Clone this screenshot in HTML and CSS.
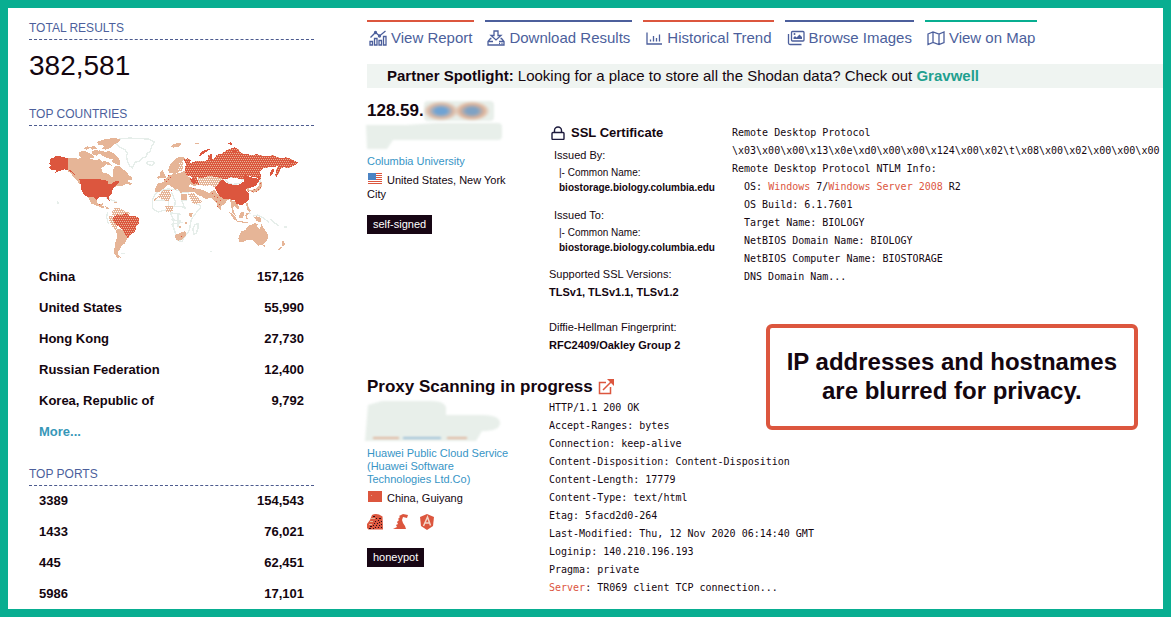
FILE: index.html
```html
<!DOCTYPE html>
<html lang="en">
<head>
<meta charset="utf-8">
<title>Search results</title>
<meta name="viewport" content="width=device-width, initial-scale=1">
<link rel="stylesheet" href="styles.css">
</head>
<body>
<div class="page">
  <aside class="sidebar">
    <h2 class="facet-title">TOTAL RESULTS</h2>
    <p class="total">382,581</p>

    <h2 class="facet-title">TOP COUNTRIES</h2>
    <svg class="map" viewBox="-3 -9 855 402" role="img" aria-label="World map of results">
      <defs>
        <pattern id="dense" width="12" height="12" patternUnits="userSpaceOnUse">
          <rect width="12" height="12" fill="#dc563e"/>
          <path d="M0 0h3v3H0zM6 0h3v3H6zM3 6h3v3H3zM9 6h3v3H9z" fill="#e6b597"/>
        </pattern>
        <pattern id="sparse" width="12" height="12" patternUnits="userSpaceOnUse">
          <rect width="12" height="12" fill="#e6b597"/>
          <path d="M0 0h3v3H0zM6 6h3v3H6z" fill="#dc563e"/>
        </pattern>
        <pattern id="light" width="12" height="12" patternUnits="userSpaceOnUse">
          <rect width="12" height="12" fill="#e6b597"/>
          <path d="M0 0h3v3H0zM6 0h3v3H6zM3 6h3v3H3zM9 6h3v3H9z" fill="#fff"/>
        </pattern>
      </defs>
      <g class="land-outline">
        <path d="M257 42l12-12 30-3 28 2 30 1 17 9-9 12-4 16-10 6-1 10-14 5-8 8-13 4-5 10-2 7-9-6-7-16-3-14 3-8-8-12-17-8z"/>
        <path d="M349 102l8-5 14 1 2 6-8 5-12-2z"/>
        <path d="M368 212l8-16 14-12 24-4 22 2 20 7 18 2 14 18 8 14 14 6 2 6-18 22-10 14-3 14-2 18-12 16-8 12-2 6-14-2-6-20-8-24 3-18-10-18-2-10-14-2-22 6-16-10z"/>
        <path d="M394 186v24h22v20m-44-16h42M424 190l12 26-2 16m20-42v24l12 26m-42-6l24-2 20 4m-44 16l28 4m-30 16l30 4m-8-22v40m-20-8l34-6M452 214h20"/>
        <path d="M489 300l6-14 9-2v14l-6 16-7 2z"/>
        <path d="M586 150l20-6 20 2 14 6-12 12-22 2-14-6z"/>
        <path d="M690 140l2 16-6 6M648 226l8 10 4 18M668 262l14-4 18 8 16 14M720 270l14 12 12 8M528 148l-4 14 8 10M608 206l8 8M228 206l20 8 14 6M232 250l-2 16 6 20M252 290l22 0 14 20"/>
        <path d="M80 218h4M82 222h4M274 374h10M540 368h6M762 294h8"/>
      </g>
      <g class="tan">
        <path d="M114 88l16-2 14 3 16-4 18 3 20 6 10-4 8 8 10-2 8 4-6 8-14 10 2 12 18 4 12 12 4-6-2-14 8-16 14 2 8 10 8 2 10 14 12 8-2 6-16 2 6 6 12 2-6 6-14-4-12 8-16 0-12 4-10-8-12-2H148l-6-12-12-10-8-12-8-4z"/>
        <path d="M204 48l-2-10 20-7 30-4 20 3-4 8-16 8-8 10-16 6-12-2 8-10z"/>
        <path d="M146 78l2-10 16-2 14 6 12 6 2 8-22 4-18-4zM160 58l12-6 8 4-10 6zM178 54l14-3 8 8-14 3zM186 66l14-4 12 10-12 8-12-4zM208 64l16 4 16-1 14 8 10 10 8 14-4 10-14-6-10-4 4-8-18-4-18-10-6-6z"/>
        <path d="M226 102l12-2 8 10-14-2z"/>
        <path d="M164 194l22 2 14 14 3 14 8 2 6-4 4 2-4 6 6 4-3 4-20-8-16-6-8-16-12-12z"/>
        <path d="M226 232l8 2 4 8-8-2zM252 220l8-1 2 3-8 1zM286 153l8-1v5l-6-1z"/>
        <path d="M247 248l6-10 8-2 14 4 12 8 14 4-12 12-16 0-10 4-10-6-6-4z" fill="url(#light)"/>
        <path d="M238 262l10-2 6 14 8 14-2 16-12-8-10-20z" fill="url(#light)"/>
        <path d="M258 302l14-2 16 10 10 10-8 12-6 12-10 6-4 10-6 10 2 10 6 6-12-2-9-12 4-26 6-22z"/>
        <path d="M422 52l10-8 20-2 2 6-10 6-14 2zM494 42l12-1 2 4-10 1z"/>
        <path d="M414 124l6-18 14-14 12-8 14-1 4 6-6 6 2 18-6 8-10 10-12 6-6-6-8 2z"/>
        <path d="M390 140l2-14 6-3 4 10 6 10-2 4-16 1zM382 146l5-8 3 8-6 4z"/>
        <path d="M384 162l16-2 2-8 12-8 12-8 14-2 16-4 10-6 8 18 14 10 14 6 2 10-12 4-10-6-8 6 12 4 12 2-4 10-18 2-14-2-10 4-4-8-8-6-4 6-10-10-8-6-8 2-8 8-14 10-10 2-4-6z"/>
        <path d="M440 122l10-22 8-4 2 22-6 8z" fill="url(#light)"/>
        <path d="M386 196l14-12 18-2 6 18-8 16-14-2-16-10zM474 194l16-1 14 14 12 12-16 6-12-2-8-16zM406 232h24v14l-20 4z" fill="url(#light)"/>
        <path d="M454 194h18v20h-18zM456 176l22-2 14 4-4 6-28 1zM492 180l14-1 18 6 14 8 2 12-12 6-12-8-12-4-10-10z"/>
        <path d="M372 212l14-12 2 2-14 14zM476 252h12l-2 12-10-2zM464 280l6-2v6h-4zM448 290h6v6h-6z"/>
        <path d="M436 318l14-6 16-6 3 12-10 12-14 5-8-2z"/>
        <path d="M500 152l14-12 16-4 14-3 16 2 16 10 4 10-12 16-12 4-16-6-18 2-16-4-6-6z" fill="url(#light)"/>
        <path d="M538 192l14-10 10 12 12 6 14 6 16 0-12 8-10 12-8 6-3 12-8-8-4-16-10-8-10-8z"/>
        <path d="M600 208l8 8 12 0 4 12 6 10-8 2-8-8-6 2 4 16 6 12-10-8-4-18z"/>
        <path d="M596 248l8 4 14 14 6 12-12-6zM620 276l26 2 12 4-14 0-24-4zM626 260l10-12 8 4-6 16-10-2zM646 258l4-6 8 2-8 4 4 14-6-4zM672 264l8-2 12 4v14l-12-4z"/>
        <path d="M648 222l6 2 2 14 6 6-2 8-8-8zM646 208l5-3v7h-4z"/>
        <path d="M660 184l16-4 8-6 6-14 6 0-2 18-10 8-14 6zM648 176l8-2 4 12-6 4z" fill="url(#sparse)"/>
        <path d="M633 308l14-6 8-12 12-4 8-4 8 4-2 8 8 6 6-16 6 14 10 12 4 16-6 12-10 10-14 2-8-8-10-8-14-2-18 8-8 0-2-12z"/>
        <path d="M698 348h8l-3 6zM756 336l4 0 6 10-6 6-4-2zM744 360l12-8-2 6-8 6zM356 388h4M260 384l8 2h-8z"/>
      </g>
      <g class="red">
        <path d="M60 90l10-4 6-5 14 1 24 6v34l8 1 10 10 4 8-8-8-12-9-12-3-8 2-14 6-12 6 12-10-18-3-6-6 8-8-10-2 6-6z"/>
        <path d="M148 150h58l16 3 10 3 4 10 8-2 10-6 8-2 6 1-4 8-10 8-6 8-2 12-8 8-2 2 4 14-6-4-4-8-22 0-8 8-10-8-22-3-8-6-6-14-2-16z"/>
        <path d="M262 256l12 2 16-6 6 8 20 2 12 6-2 16-8 10-2 14-10 6-8 8-4 8-6-10-6-12-10-12-10-6-10-8-4-16z" fill="url(#dense)"/>
        <path d="M460 90l14-2 10 6-6 8 8-1 14-6 14 2 12-2 8-2 0-14 8-4 2 14 8 2 8-14 14-2 20-14 20-6 12 6 8 12 16 2 16 4 14-4 20 6 30-2 20 8 20-2 20 8 14 8-6 6-14 6-8 4-16-2-10 6-2 10-8 12-4-2 2-18 6-12-12 4-16 0-18 4-8 10 4 16-6 10-4-8-30-6-16 10-36-6-16 6-14-4-18-4-20-2-14 6-20-2 8 24-16-10-8-16-16-6-4-12 4-20z" fill="url(#dense)"/>
        <path d="M508 80l4-10 12-6 16-6-2 5-14 8-12 10zM590 42l12-2 6 8-10-2zM598 64l10 0 16 4-10 2zM776 94h12v6h-8zM718 138l6-16 8-2-2 14-8 6zM684 138l4 2 2 14-4-2z"/>
        <path d="M540 80l6-5v18l-6-4zM480 148l16 4-2 14-8-4z"/>
        <path d="M400 152l12-6 10 6-4 8-10 2zM414 138h12v14h-10z" fill="url(#sparse)"/>
        <path d="M554 176l10-8 6-12 10-4 10 10 18 5 18 0 14-8 4-6-8-4 6-6 4-6 16 8 18 2 8 6-4 8-8 10-16 6-10 1-2 8 8 8 2 14-6 10-14 9-8 1-6-2-4 0-6-12-16-4-16 0-12-8-8-12z"/>
        <path d="M546 192h3v3h-3zM552 200h3v3h-3zM562 204h3v3h-3zM570 212h3v3h-3zM558 216h3v3h-3zM566 224h3v3h-3zM560 232h3v3h-3zM580 208h3v3h-3zM424 182h3v3h-3zM488 177h3v3h-3zM452 320h3v3h-3zM208 226h3v3h-3z"/>
      </g>
    </svg>
    <ul class="facet">
      <li><span>China</span><span>157,126</span></li>
      <li><span>United States</span><span>55,990</span></li>
      <li><span>Hong Kong</span><span>27,730</span></li>
      <li><span>Russian Federation</span><span>12,400</span></li>
      <li><span>Korea, Republic of</span><span>9,792</span></li>
      <li><a class="more" href="#">More...</a></li>
    </ul>

    <h2 class="facet-title">TOP PORTS</h2>
    <ul class="facet">
      <li><span>3389</span><span>154,543</span></li>
      <li><span>1433</span><span>76,021</span></li>
      <li><span>445</span><span>62,451</span></li>
      <li><span>5986</span><span>17,101</span></li>
    </ul>
  </aside>

  <main class="main">
    <nav class="tabs">
      <a class="tab tab-red" href="#">
        <svg class="icon" viewBox="0 0 18 18" aria-hidden="true"><path d="M1.500 8.500l5-5 4 3.500 6-5M1 16v-3.500h2.500V16zM5.500 16V9.500H8V16zM10 16v-4.500h2.500V16zM14.500 16V7.500H17V16z"/><circle cx="6.500" cy="3.500" r="1"/><circle cx="10.500" cy="7" r="1"/></svg>
        View Report</a>
      <a class="tab tab-blue" href="#">
        <svg class="icon" viewBox="0 0 18 18" aria-hidden="true"><path d="M7 2h4v4.500h3L9 11 4 6.500h3zM4.500 9.500h-1L1 12.500V16h16v-3.500l-2.500-3h-1M1 12.500h5M12 12.500h5"/><path d="M12 14.500h1M14.500 14.500h1"/></svg>
        Download Results</a>
      <a class="tab tab-red" href="#">
        <svg class="icon" viewBox="0 0 18 18" aria-hidden="true"><path d="M2 3.500V15h15M5.500 12.500v-2M8.500 12.500V7M11.500 12.500V9M14.500 12.500V5.500"/></svg>
        Historical Trend</a>
      <a class="tab tab-blue" href="#">
        <svg class="icon" viewBox="0 0 18 18" aria-hidden="true"><rect x="4.500" y="2.500" width="12.500" height="9.500" rx="1"/><path d="M1.500 5v9q0 1.500 1.500 1.500h11.500"/><path class="solid" d="M6.500 10V8.500l1.500-1.500 1.500 1.500 3-3 2.500 2.500v2z"/><circle class="solid" cx="7.500" cy="5" r="1"/></svg>
        Browse Images</a>
      <a class="tab tab-green" href="#">
        <svg class="icon" viewBox="0 0 18 18" aria-hidden="true"><path d="M1 5l5-2 6 2 5-2v10.500l-5 2-6-2-5 2zM6 3v10.500M12 5v10.500"/></svg>
        View on Map</a>
    </nav>

    <p class="spotlight"><strong>Partner Spotlight:</strong> Looking for a place to store all the Shodan data? Check out <a href="#">Gravwell</a></p>

    <article class="record">
      <h3 class="record-title">128.59.<span class="masked-ip" aria-hidden="true"></span></h3>
      <div class="columns">
        <div class="host">
          <svg class="smudge smudge-small" viewBox="0 0 142 32" aria-hidden="true"><path d="M3 4h40l30-2h62q4 0 4 4v9q0 4-4 4H30l-6 9H4z"/></svg>
          <a class="org" href="#">Columbia University</a>
          <p class="place"><svg class="flag" viewBox="0 0 14 11" role="img" aria-label="United States"><path fill="#fff" d="M0 0h14v11H0z"/><path fill="#dc563e" d="M0 0h14v1H0zM0 2h14v1H0zM0 4h14v1H0zM0 6h14v1H0zM0 8h14v1H0zM0 10h14v1H0z"/><path fill="#4c84c4" d="M0 0h8v7H0z"/></svg>United States, New York City</p>
          <span class="badge">self-signed</span>
        </div>
        <section class="cert">
          <h4 class="cert-title"><svg class="lock" viewBox="0 0 14 14" aria-hidden="true"><rect x="1" y="6.500" width="12" height="7" rx="1"/><path d="M3.500 6.500V4.500a3.500 3.500 0 0 1 7 0v2"/></svg>SSL Certificate</h4>
          <dl class="issuer">
            <dt>Issued By:</dt>
            <dd>|- Common Name:<br><b>biostorage.biology.columbia.edu</b></dd>
            <dt>Issued To:</dt>
            <dd>|- Common Name:<br><b>biostorage.biology.columbia.edu</b></dd>
          </dl>
          <dl class="versions">
            <dt>Supported SSL Versions:</dt>
            <dd>TLSv1, TLSv1.1, TLSv1.2</dd>
            <dt>Diffie-Hellman Fingerprint:</dt>
            <dd>RFC2409/Oakley Group 2</dd>
          </dl>
        </section>
        <div class="banner">
          <code>Remote Desktop Protocol</code>
          <code>\x03\x00\x00\x13\x0e\xd0\x00\x00\x124\x00\x02\t\x08\x00\x02\x00\x00\x00</code>
          <code>Remote Desktop Protocol NTLM Info:</code>
          <code>  OS: <em>Windows</em> 7/<em>Windows</em> <em>Server</em> <em>2008</em> R2</code>
          <code>  OS Build: 6.1.7601</code>
          <code>  Target Name: BIOLOGY</code>
          <code>  NetBIOS Domain Name: BIOLOGY</code>
          <code>  NetBIOS Computer Name: BIOSTORAGE</code>
          <code>  DNS Domain Nam...</code>
        </div>
      </div>
    </article>

    <article class="record">
      <h3 class="record-title">Proxy Scanning in progress
        <a class="open" href="#" aria-label="Open host"><svg viewBox="0 0 16 16" aria-hidden="true"><path d="M8 3.500H1.500v11H12.500V8M5 11L14 2"/><path class="solid" d="M9 0h7v7z"/></svg></a></h3>
      <div class="columns columns-wide">
        <div class="host">
          <svg class="smudge smudge-large" viewBox="0 0 142 44" aria-hidden="true"><path d="M5 8l14-4h50q12 0 14 6v8h36q18 0 18 8t-18 8l-6 10H2z"/><path class="smudge-tan" d="M10 41h26M84 41h20"/><path class="smudge-blue" d="M40 41h38"/></svg>
          <a class="org" href="#">Huawei Public Cloud Service (Huawei Software Technologies Ltd.Co)</a>
          <p class="place"><svg class="flag" viewBox="0 0 14 11" role="img" aria-label="China"><path fill="#dc563e" d="M0 0h14v11H0z"/><path fill="#e9a58c" d="M3 4h1v1H3z"/></svg>China, Guiyang</p>
          <div class="tech">
            <svg viewBox="0 0 16 16" role="img" aria-label="Ruby"><path fill="#dc563e" d="M5 1q3-1.500 7-.500l3.500 2L16 15.500H1.500L0 14v-4l3-4z"/><path fill="#2a1018" d="M6 2h2v1H6zM9 4h1v1H9zM12 4h2v1h-2zM11 6h1v1h-1zM14 7h1v1h-1zM8 7h1v1H8zM12 8h1v1h-1zM10 9h1v1h-1zM7 9h1v1H7zM14 10h1v1h-1zM9 11h1v1H9zM12 11h1v1h-1zM6 11h1v1H6zM3 12h2v1H3zM8 13h1v1H8zM11 13h1v1h-1zM14 13h1v1h-1zM6 14h1v1H6zM2 14h2v1H2z"/><path fill="#e6b597" d="M4 4h4v1H4zM3 7h3v1H3zM2 10h3v1H2z"/></svg>
            <svg viewBox="0 0 16 16" role="img" aria-label="Web server"><path fill="#dc563e" d="M6 2l4-2 5 1-1 3-4-1-1 3 1 3 2 3 1 3H0l4-2-1-2 2-1-1-2 2-2-1-1 2-2z"/></svg>
            <svg viewBox="0 0 16 16" role="img" aria-label="Angular"><path fill="#dc563e" d="M8 0l7 3-1 9-6 4-6-4-1-9z"/><path stroke="#f3d5c7" stroke-width="1.500" fill="none" d="M4.500 12L8.500 3l3 8.500M6 9h5"/></svg>
          </div>
          <span class="badge">honeypot</span>
        </div>
        <div class="banner">
          <code>HTTP/1.1 200 OK</code>
          <code>Accept-Ranges: bytes</code>
          <code>Connection: keep-alive</code>
          <code>Content-Disposition: Content-Disposition</code>
          <code>Content-Length: 17779</code>
          <code>Content-Type: text/html</code>
          <code>Etag: 5facd2d0-264</code>
          <code>Last-Modified: Thu, 12 Nov 2020 06:14:40 GMT</code>
          <code>Loginip: 140.210.196.193</code>
          <code>Pragma: private</code>
          <code><em>Server</em>: TR069 client TCP connection...</code>
        </div>
      </div>
    </article>

    <p class="notice">IP addresses and hostnames<br>are blurred for privacy.</p>
  </main>
</div>
</body>
</html>
```

FILE: styles.css
```css
* {
  box-sizing: border-box;
}

body,
h2,
h3,
h4,
p,
ul,
dl,
dd {
  margin: 0;
  padding: 0;
}

body {
  background: #fff;
  color: #14060f;
  font-family: "Liberation Sans", Arial, sans-serif;
  font-size: 11px;
}

a {
  text-decoration: none;
}

.page {
  display: grid;
  grid-template-columns: 285px minmax(0, 1fr);
  gap: 53px;
  min-height: 100vh;
  padding-left: 21px;
  border: 8px solid #08ae91;
}

/* Sidebar */
.sidebar {
  padding: 12px 0 4px;
}

.facet-title {
  padding-bottom: 3px;
  border-bottom: 1px dashed #4c5a8e;
  color: #4c5f9c;
  font-size: 12px;
  font-weight: 400;
  line-height: 16px;
}

.total {
  margin: 10px 0 24px;
  font-size: 28px;
  line-height: 32px;
}

.map {
  display: block;
  width: 100%;
  shape-rendering: crispEdges;
}

.land-outline {
  fill: none;
  stroke: #e6eeea;
  stroke-width: 4;
}

.tan {
  fill: #e6b597;
}

.red {
  fill: #dc563e;
}

.facet {
  display: flex;
  flex-direction: column;
  gap: 10px;
  padding: 4px 10px 0;
  font-size: 13px;
  font-weight: 700;
  line-height: 21px;
  list-style: none;
}

.facet li {
  display: flex;
  justify-content: space-between;
}

.map + .facet {
  margin: 2px 0 24px;
}

.more {
  color: #3797b8;
}

/* Main column */
.main {
  position: relative;
  padding-top: 12px;
}

.tabs {
  display: flex;
  gap: 11px;
}

.tab {
  display: flex;
  align-items: center;
  gap: 4px;
  padding: 6px 2px 0;
  border-top: 2px solid;
  color: #4c5f9c;
  font-size: 15px;
  line-height: 20px;
  white-space: nowrap;
}

.tab-red {
  border-top-color: #dc563e;
}

.tab-blue {
  border-top-color: #4c5f9c;
}

.tab-green {
  border-top-color: #08ae91;
}

.icon {
  width: 18px;
  height: 18px;
  fill: none;
  stroke: #4c5f9c;
  stroke-width: 1.3;
}

.icon .solid {
  fill: #4c5f9c;
  stroke: none;
}

.spotlight {
  margin-top: 16px;
  padding-left: 20px;
  background: #eff4f1;
  font-size: 15px;
  line-height: 24px;
}

.spotlight a {
  color: #1fa08f;
  font-weight: 700;
}

/* Result records */
.record {
  margin-top: 13px;
}

.record + .record {
  margin-top: 23px;
}

.record-title {
  display: flex;
  align-items: center;
  font-size: 17px;
  line-height: 20px;
}

.masked-ip {
  width: 70px;
  height: 20px;
  border-radius: 4px;
  background:
    radial-gradient(ellipse 18px 10px at 17px 10px, #6fa3d4 30%, #dcb9a4 70%, transparent),
    radial-gradient(ellipse 18px 10px at 48px 10px, #7fa2c4 30%, #dfb49a 70%, transparent),
    #e8efea;
  filter: blur(1px);
}

.open {
  display: flex;
  margin-left: 5px;
}

.open svg {
  width: 16px;
  height: 16px;
  fill: none;
  stroke: #dc563e;
  stroke-width: 1.5;
}

.open .solid {
  fill: #dc563e;
  stroke: none;
}

.columns {
  display: grid;
  grid-template-columns: 182px 183px minmax(0, 1fr);
}

.columns-wide {
  grid-template-columns: 182px minmax(0, 1fr);
}

.host {
  display: flex;
  flex-direction: column;
  align-items: flex-start;
  padding-right: 36px;
}

.smudge {
  width: 142px;
  margin-left: -4px;
  fill: #e8efea;
  filter: blur(1px);
}

.smudge-small {
  height: 32px;
  margin-bottom: 2px;
}

.smudge-large {
  height: 44px;
  margin-bottom: 6px;
}

.smudge-tan {
  stroke: #dfb79f;
  stroke-width: 2;
}

.smudge-blue {
  stroke: #9fc0d8;
  stroke-width: 2;
}

.org {
  color: #3795c6;
  line-height: 13px;
}

.place {
  margin-top: 5px;
  line-height: 14px;
}

.flag {
  width: 14px;
  height: 11px;
  margin: 0 5px 0 1px;
}

.tech {
  display: flex;
  gap: 10px;
  margin-top: 9px;
}

.tech svg {
  width: 16px;
  height: 16px;
}

.badge {
  margin-top: 14px;
  padding: 0 6px;
  background: #170614;
  color: #fff;
  line-height: 19px;
}

.tech + .badge {
  margin-top: 18px;
}

.cert {
  padding-top: 2px;
}

.cert-title {
  display: flex;
  align-items: center;
  gap: 6px;
  padding-left: 2px;
  font-size: 13px;
  line-height: 20px;
}

.lock {
  width: 14px;
  height: 14px;
  fill: none;
  stroke: #1c1a3c;
  stroke-width: 1.4;
}

.issuer {
  padding: 4px 0 0 5px;
}

.issuer dt {
  line-height: 16px;
}

.issuer dd {
  margin-bottom: 12px;
  padding: 2px 0 0 5px;
  font-size: 10px;
  line-height: 15px;
}

.issuer dd:last-child {
  margin-bottom: 10px;
}

.versions {
  line-height: 18px;
}

.versions dd {
  margin-bottom: 17px;
  font-weight: 700;
}

.versions dd:last-child {
  margin-bottom: 0;
}

.banner {
  padding-top: 3px;
  overflow: hidden;
}

.columns-wide .banner {
  padding-top: 2px;
}

.banner code {
  display: block;
  font-family: "DejaVu Sans Mono", monospace;
  font-size: 10px;
  line-height: 18px;
  white-space: pre;
}

.banner em {
  color: #dc563e;
  font-style: normal;
}

.notice {
  position: absolute;
  top: 316px;
  right: 25px;
  padding: 19px 17px 21px;
  border: 4px solid #dc563e;
  border-radius: 6px;
  background: #fff;
  font-size: 24px;
  font-weight: 700;
  line-height: 29px;
  text-align: center;
}
```
